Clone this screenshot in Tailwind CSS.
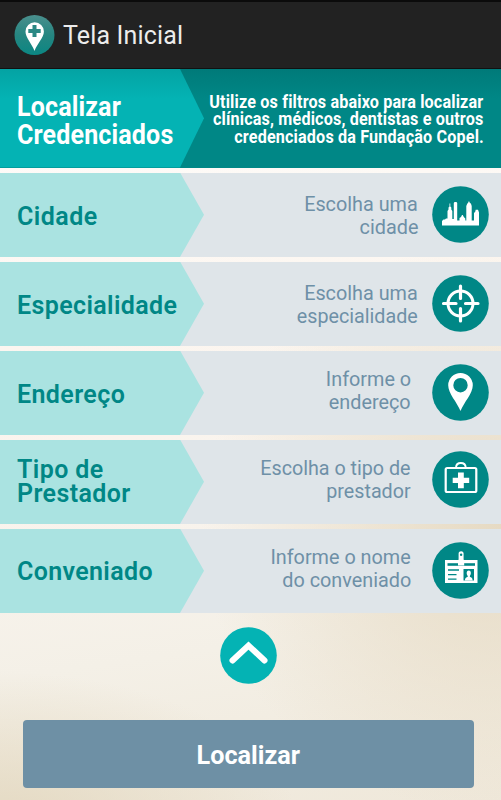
<!DOCTYPE html>
<html lang="pt-BR">
<head>
    <meta charset="UTF-8">
    <meta name="viewport" content="width=device-width, initial-scale=1.0">
    <title>Tela Inicial</title>
    <script src="https://cdn.jsdelivr.net/npm/@tailwindcss/browser@4"></script>
</head>
<body class="w-[501px] h-[800px] overflow-hidden flex flex-col font-['Roboto','Liberation_Sans',sans-serif] bg-[radial-gradient(ellipse_60%_36%_at_100%_66%,#e6dac3,#e6dac300),radial-gradient(ellipse_60%_20%_at_0%_104%,#e3d8c0,#e3d8c000),linear-gradient(172deg,#fff_0%,#fcf6f0_40%,#f8f3ec_65%,#f4f0e7_78%,#efe8da_100%)]">
    <!-- Header -->
    <header class="h-[69px] shrink-0 flex items-center bg-[#222] border-t-2 border-t-[#0b0b0b] border-b border-b-[#111] pl-[14px] pb-px">
        <svg class="w-[41px] h-[42px] shrink-0" viewBox="0 0 41 42">
            <defs>
                <linearGradient id="logo" x1="0" y1="0" x2="0" y2="1">
                    <stop offset="0" stop-color="#4a8f8d" />
                    <stop offset="0.5" stop-color="#268681" />
                    <stop offset="1" stop-color="#0b8783" />
                </linearGradient>
            </defs>
            <circle cx="20.5" cy="21" r="20" fill="url(#logo)" />
            <path fill="#fff" d="M20.5 37C17.500 29 11.500 23.500 11.500 17.500a9.200 9.200 0 0 1 18.400 0c0 6-6.400 11.500-9.400 19.500z" />
            <path fill="#2b8884" d="M18.500 11h4v4h4.200v4h-4.200v4h-4v-4h-4.200v-4h4.200z" />
        </svg>
        <h1 class="ml-2 pt-[3px] text-[25px] leading-[30px] tracking-[0.150px] text-[#ececec] whitespace-nowrap">Tela Inicial</h1>
    </header>

    <main class="flex-1 flex flex-col">
        <!-- Banner -->
        <section class="h-[98.500px] shrink-0 flex bg-[linear-gradient(#007a79,#008786_30%)] text-white font-bold">
            <div class="w-[204px] shrink-0 pl-[17px] pt-[24px] bg-[linear-gradient(#04a3a3,#04b3b4_30%)] [clip-path:polygon(0_0,180px_0,100%_50%,180px_100%,0_100%)] text-[28px] leading-[28px] tracking-[0.150px] whitespace-nowrap">
                <div class="origin-left scale-x-[0.895]">Localizar</div>
                <div class="origin-left scale-x-[0.895]">Credenciados</div>
            </div>
            <div class="flex-1 min-w-0 flex flex-col items-end pr-[17.500px] pt-[24.500px] text-[17.500px] leading-[17.800px] tracking-[0.160px] whitespace-nowrap">
                <div class="origin-right scale-x-[0.925]">Utilize os filtros abaixo para localizar</div>
                <div class="origin-right scale-x-[0.925]">clínicas, médicos, dentistas e outros</div>
                <div class="origin-right scale-x-[0.925]">credenciados da Fundação Copel.</div>
            </div>
        </section>

        <!-- Filters -->
        <ul class="pt-[5px] flex flex-col gap-[4.500px] text-[#6e90a7] text-[20px] leading-[23.200px] whitespace-nowrap">
            <li class="h-[84.500px] flex items-center bg-[#dfe5e9]">
                <div class="w-[204px] h-full shrink-0 flex flex-col justify-center pl-[17px] pt-[5px] bg-[#aae3e1] [clip-path:polygon(0_0,180px_0,100%_50%,180px_100%,0_100%)] text-[#008786] text-[25px] leading-[24px] tracking-[0.450px] font-semibold">
                    <div>Cidade</div>
                </div>
                <div class="flex-1 flex flex-col items-end pt-[2px]">
                    <div class="origin-right scale-x-[0.99]">Escolha uma</div>
                    <div class="origin-right scale-x-[0.99]">cidade</div>
                </div>
                <svg class="w-[57px] h-[57px] ml-[14px] mr-3 shrink-0" viewBox="0 0 57 57">
                    <circle cx="28.500" cy="28.500" r="28.300" fill="#008786" />
                    <path fill="#fff" d="M10 39.500v-4.500l1.500-1.500h1.500l1-1h1.500V25l1-1.500v-2l1-1v-3h.8v3l1 1v2l1 1.500v8h1.500V17l.7-1h2l.7 1v17.500h2.300V32l1.500-1 1-2h.8l1 2 1.500 1.500v2h1V20l1-2.500.8-.5.4-1.500h.8l.6 1.500 1 .5.8 2.500v14.500H42V26.500h1l.7-2.800h2.300l1 2.800v13z" />
                </svg>
            </li>
            <li class="h-[84.500px] flex items-center bg-[#dfe5e9]">
                <div class="w-[204px] h-full shrink-0 flex flex-col justify-center pl-[17px] pt-[5px] bg-[#aae3e1] [clip-path:polygon(0_0,180px_0,100%_50%,180px_100%,0_100%)] text-[#008786] text-[25px] leading-[24px] tracking-[0.380px] font-semibold">
                    <div>Especialidade</div>
                </div>
                <div class="flex-1 flex flex-col items-end pt-[2px]">
                    <div class="origin-right scale-x-[0.99]">Escolha uma</div>
                    <div class="origin-right scale-x-[0.985]">especialidade</div>
                </div>
                <svg class="w-[57px] h-[57px] ml-[14px] mr-3 shrink-0" viewBox="0 0 57 57">
                    <circle cx="28.500" cy="28.500" r="28.300" fill="#008786" />
                    <circle cx="28.500" cy="28.500" r="12.500" fill="none" stroke="#fff" stroke-width="3" />
                    <path stroke="#fff" stroke-width="3.200" stroke-linecap="round" d="M28.500 11v12.500M28.500 33.500v12.500M11.500 28.500h12.500M33.500 28.500h12.500" />
                </svg>
            </li>
            <li class="h-[84.500px] flex items-center bg-[#dfe5e9]">
                <div class="w-[204px] h-full shrink-0 flex flex-col justify-center pl-[17px] pt-[5px] bg-[#aae3e1] [clip-path:polygon(0_0,180px_0,100%_50%,180px_100%,0_100%)] text-[#008786] text-[25px] leading-[24px] tracking-[0.400px] font-semibold">
                    <div>Endereço</div>
                </div>
                <div class="flex-1 flex flex-col items-end pb-[4px]">
                    <div class="origin-right scale-x-[0.99]">Informe o</div>
                    <div class="origin-right scale-x-[0.99]">endereço</div>
                </div>
                <svg class="w-[57px] h-[57px] ml-[21px] mr-3 shrink-0" viewBox="0 0 57 57">
                    <circle cx="28.500" cy="28.500" r="28.300" fill="#008786" />
                    <path fill="#fff" fill-rule="evenodd" d="M28.500 47C25 38 16.200 29.500 16.200 21.200a12.300 12.300 0 0 1 24.600 0C40.800 29.500 32 38 28.500 47zM28.500 14a7.200 7.200 0 1 0 0 14.400 7.200 7.200 0 0 0 0-14.400z" />
                </svg>
            </li>
            <li class="h-[84.500px] flex items-center bg-[#dfe5e9]">
                <div class="w-[204px] h-full shrink-0 flex flex-col justify-center pl-[17px] pt-px bg-[#aae3e1] [clip-path:polygon(0_0,180px_0,100%_50%,180px_100%,0_100%)] text-[#008786] text-[25px] leading-[24px] tracking-[0.400px] font-semibold">
                    <div>Tipo de</div>
                    <div>Prestador</div>
                </div>
                <div class="flex-1 flex flex-col items-end pb-[3px]">
                    <div class="origin-right scale-x-[0.985]">Escolha o tipo de</div>
                    <div class="origin-right scale-x-[0.985]">prestador</div>
                </div>
                <svg class="w-[57px] h-[57px] ml-[21px] mr-3 mb-[5px] shrink-0" viewBox="0 0 57 57">
                    <circle cx="28.500" cy="28.500" r="28.300" fill="#008786" />
                    <rect x="13.700" y="17" width="30.600" height="24" rx="1.500" fill="none" stroke="#fff" stroke-width="2.200" />
                    <path fill="none" stroke="#fff" stroke-width="1.900" d="M24 16.500c.3-6 9.400-6 9.700 0" />
                    <path fill="#fff" d="M26 21.500h5.800v5.200h5.400v5.200h-5.400v5.300H26v-5.300h-5.300v-5.200H26z" />
                </svg>
            </li>
            <li class="h-[84.500px] flex items-center bg-[#dfe5e9]">
                <div class="w-[204px] h-full shrink-0 flex flex-col justify-center pl-[17px] pt-[2px] bg-[#aae3e1] [clip-path:polygon(0_0,180px_0,100%_50%,180px_100%,0_100%)] text-[#008786] text-[25px] leading-[24px] tracking-[0.350px] font-semibold">
                    <div>Conveniado</div>
                </div>
                <div class="flex-1 flex flex-col items-end pb-[4px]">
                    <div class="origin-right scale-x-[0.99]">Informe o nome</div>
                    <div class="origin-right scale-x-[0.99]">do conveniado</div>
                </div>
                <svg class="w-[57px] h-[57px] ml-[21px] mr-3 shrink-0" viewBox="0 0 57 57">
                    <circle cx="28.500" cy="28.500" r="28.300" fill="#008786" />
                    <path fill="#fff" d="M13 18h32.500v23H13z" />
                    <path stroke="#008786" stroke-width="2.600" d="M15.500 22.500h27.500" />
                    <path stroke="#008786" stroke-width="1.300" d="M16 28h11M16 32.700h8.500M16 37.200h8.500" />
                    <path fill="#008786" d="M31.500 27h10.500v11.500H31.500z" />
                    <path fill="#fff" d="M33 38.500c0-3 1.500-3.200 2.700-3.500v-1c-1.600-2-1.300-5.400 1.100-5.400s2.700 3.400 1.100 5.400v1c1.200.3 2.700.5 2.700 3.500z" />
                    <path fill="#fff" d="M26 23.500v-5l.6-1v-6c0-3 5-3 5 0v6l.6 1v5z" />
                    <circle cx="29.100" cy="12.800" r="1.200" fill="#008786" />
                </svg>
            </li>
        </ul>

        <!-- Collapse and submit -->
        <div class="flex flex-col items-center pt-[14px] pr-1">
            <button type="button" aria-label="Recolher">
                <svg class="w-[57px] h-[57px] block" viewBox="0 0 57 57">
                    <circle cx="28.500" cy="28.500" r="28.300" fill="#04b3b4" />
                    <path fill="none" stroke="#fff" stroke-width="6" stroke-linecap="round" d="M12.500 33.500l16-15 16 15" />
                </svg>
            </button>
        </div>
        <div class="pl-[23px] pr-[27px] pt-[35.500px]">
            <button type="button" class="block w-full h-[68px] rounded-[4px] bg-[#6e90a5] text-white text-[26px] leading-[30px] font-bold pt-[2px]">
                <span class="inline-block scale-x-[0.970]">Localizar</span>
            </button>
        </div>
    </main>
</body>
</html>
